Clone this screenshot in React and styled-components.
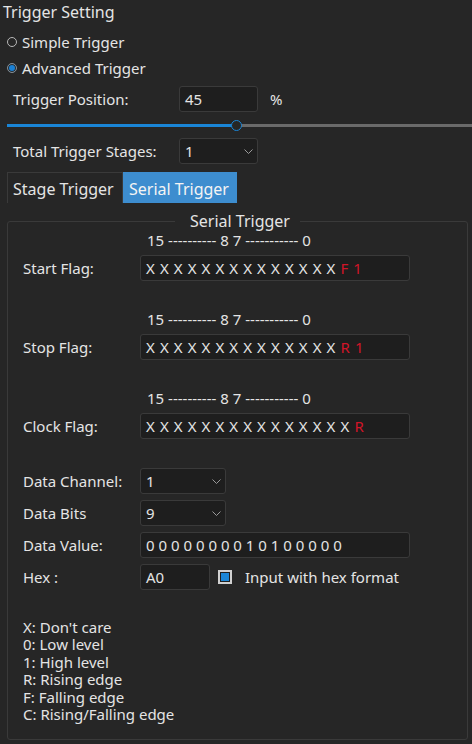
import React from 'react';
import styled, { createGlobalStyle } from 'styled-components';

const GlobalStyle = createGlobalStyle`
  html, body {
    margin: 0;
    padding: 0;
    background: #262626;
  }
  * {
    box-sizing: border-box;
  }
`;

const Page = styled.div`
  width: 472px;
  height: 744px;
  overflow: hidden;
  background: #262626;
  color: #e4e4e4;
  font-family: 'Noto Sans', 'Open Sans', sans-serif;
  font-size: 15px;
  display: flex;
  flex-direction: column;
`;

const Title = styled.div`
  height: 29px;
  padding: 1px 0 0 3px;
  font-size: 16px;
`;

const RadioRow = styled.label`
  height: 26px;
  display: flex;
  align-items: center;
  gap: 5px;
  padding-left: 7px;
`;

const RadioDot = styled.span`
  width: 10px;
  height: 10px;
  border-radius: 50%;
  border: 1px solid ${({ checked }) => (checked ? '#8a8a8a' : '#b8b8b8')};
  background: ${({ checked }) => (checked ? '#1a80d4' : 'transparent')};
  box-shadow: ${({ checked }) => (checked ? 'inset 0 0 0 1px #262626' : 'none')};
`;

const FormRow = styled.div`
  display: flex;
  align-items: center;
  height: 26px;
  margin-top: ${({ mt = 0 }) => mt}px;
  padding-left: ${({ pl = 13 }) => pl}px;
`;

const Label = styled.span`
  width: ${({ w = 166 }) => w}px;
  flex: none;
`;

const Field = styled.div`
  width: ${({ w }) => w}px;
  height: 26px;
  flex: none;
  display: flex;
  align-items: center;
  padding-left: ${({ pad = 5 }) => pad}px;
  background: #1e1e1e;
  border: 1px solid #3a3a3a;
  border-radius: 3px;
  white-space: pre;
  position: relative;
`;

const Unit = styled.span`
  margin-left: 12px;
`;

const Chevron = styled.svg`
  position: absolute;
  right: 4px;
  top: 10px;
`;

const Select = ({ w, value }) => (
  <Field w={w}>
    {value}
    <Chevron width="9" height="6" viewBox="0 0 9 6">
      <path d="M0.5 0.5 L4.5 4.5 L8.5 0.5" fill="none" stroke="#9a9a9a" strokeWidth="1" />
    </Chevron>
  </Field>
);

const SliderTrack = styled.div`
  margin: 12px 0 0 7px;
  height: 3px;
  display: flex;
  position: relative;
`;

const SliderFill = styled.div`
  width: ${({ w }) => w}px;
  background: #1a85d6;
`;

const SliderRest = styled.div`
  flex: 1;
  background: #6a6a6a;
`;

const SliderHandle = styled.div`
  position: absolute;
  left: ${({ x }) => x - 5}px;
  top: -4px;
  width: 11px;
  height: 11px;
  border-radius: 50%;
  border: 1.5px solid #1a85d6;
  background: #262626;
`;

const Tabs = styled.div`
  display: flex;
  margin: 8px 0 0 7px;
  height: 31px;
`;

const Tab = styled.div`
  width: ${({ w }) => w}px;
  display: flex;
  align-items: center;
  padding: 1px 0 0 5px;
  font-size: 16px;
  background: ${({ active }) => (active ? '#3d8dcf' : '#262626')};
  border: 1px solid ${({ active }) => (active ? '#3d8dcf' : '#3a3a3a')};
  border-bottom: none;
  color: ${({ active }) => (active ? '#f4f4f4' : '#e4e4e4')};
  white-space: nowrap;
`;

const Group = styled.fieldset`
  margin: 9px 4px 0 7px;
  padding: 0;
  border: 1px solid #3a3a3a;
  border-radius: 3px;
  height: 528px;
  min-width: 0;
`;

const Legend = styled.legend`
  margin: 0 auto;
  padding: 0 12px 0 13px;
  font-size: 16px;
  line-height: 18px;
  position: relative;
  left: 2px;
`;

const GroupBody = styled.div`
  padding-left: 15px;
`;

const BitHeader = styled.div`
  margin: ${({ mt }) => mt}px 0 0 124px;
  height: 16px;
  line-height: 16px;
  white-space: pre;
`;

const Bits = styled.span`
  letter-spacing: ${({ ls = 0.6 }) => ls}px;
`;

const Red = styled.span`
  color: #d01528;
  letter-spacing: 0.6px;
`;

const CheckBox = styled.span`
  width: 14px;
  height: 14px;
  margin: 0 13px 0 8px;
  border: 2px solid #d0d0d0;
  background: #1a85d6;
  box-shadow: inset 0 0 0 1px #1e1e1e;
`;

const Notes = styled.div`
  margin-top: 29px;
  line-height: 17.4px;
`;

const flags = [
  { label: 'Start Flag:', xs: 14, tail: 'F 1', mt: 2 },
  { label: 'Stop Flag:', xs: 14, tail: 'R 1', mt: 30 },
  { label: 'Clock Flag:', xs: 15, tail: 'R', mt: 30 }
];

const notes = [
  'X: Don\'t care',
  '0: Low level',
  '1: High level',
  'R: Rising edge',
  'F: Falling edge',
  'C: Rising/Falling edge'
];

export default function App() {
  return (
    <Page>
      <GlobalStyle />
      <Title>Trigger Setting</Title>
      <RadioRow>
        <RadioDot />
        Simple Trigger
      </RadioRow>
      <RadioRow>
        <RadioDot checked />
        Advanced Trigger
      </RadioRow>
      <FormRow mt={5}>
        <Label>Trigger Position:</Label>
        <Field w={79}>45</Field>
        <Unit>%</Unit>
      </FormRow>
      <SliderTrack>
        <SliderFill w={229} />
        <SliderRest />
        <SliderHandle x={229} />
      </SliderTrack>
      <FormRow mt={11}>
        <Label>Total Trigger Stages:</Label>
        <Select w={79} value="1" />
      </FormRow>
      <Tabs>
        <Tab w={116}>Stage Trigger</Tab>
        <Tab w={114} active>Serial Trigger</Tab>
      </Tabs>
      <Group>
        <Legend>Serial Trigger</Legend>
        <GroupBody>
          {flags.map((f) => (
            <React.Fragment key={f.label}>
              <BitHeader mt={f.mt}>{'15 ---------- 8 7 ----------- 0'}</BitHeader>
              <FormRow mt={7} pl={0}>
                <Label w={117}>{f.label}</Label>
                <Field w={270}>
                  <Bits>{Array(f.xs).fill('X').join(' ')} </Bits>
                  <Red>{f.tail}</Red>
                </Field>
              </FormRow>
            </React.Fragment>
          ))}
          <FormRow mt={29} pl={0}>
            <Label w={117}>Data Channel:</Label>
            <Select w={86} value="1" />
          </FormRow>
          <FormRow mt={6} pl={0}>
            <Label w={117}>Data Bits</Label>
            <Select w={86} value="9" />
          </FormRow>
          <FormRow mt={6} pl={0}>
            <Label w={117}>Data Value:</Label>
            <Field w={270}>
              <Bits ls={0}>0 0 0 0 0 0 0 0 1 0 1 0 0 0 0 0</Bits>
            </Field>
          </FormRow>
          <FormRow mt={6} pl={0}>
            <Label w={117}>Hex :</Label>
            <Field w={70}>A0</Field>
            <CheckBox />
            Input with hex format
          </FormRow>
          <Notes>
            {notes.map((n) => (
              <div key={n}>{n}</div>
            ))}
          </Notes>
        </GroupBody>
      </Group>
    </Page>
  );
}
